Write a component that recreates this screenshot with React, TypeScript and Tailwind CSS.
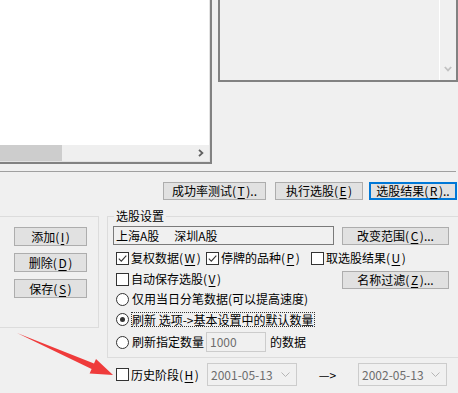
import React from 'react';

function Key({ c }: { c: string }) {
  return (
    <span>(<span className="mx-[1.5px] underline underline-offset-[2px]">{c}</span>)</span>
  );
}

function Btn({ text, k, tail = '', className = '', primary = false }: {
  text: string; k: string; tail?: string; className?: string; primary?: boolean;
}) {
  return (
    <div className={`flex items-center justify-center shrink-0 bg-[#e1e1e1] ${primary ? 'border-2 border-[#0078d7]' : 'border border-[#adadad]'} ${className}`}>
      <span className="whitespace-nowrap">{text}<Key c={k} />{tail}</span>
    </div>
  );
}

function Check({ on = false }: { on?: boolean }) {
  return (
    <span className="w-[13px] h-[13px] shrink-0 border border-[#333333] bg-white flex items-center justify-center">
      {on && (
        <svg width="11" height="11" viewBox="0 0 11 11">
          <path d="M1.8 5.6 L4.3 8.1 L9.3 2.6" fill="none" stroke="#333333" strokeWidth="1.1" />
        </svg>
      )}
    </span>
  );
}

function Radio({ on = false }: { on?: boolean }) {
  return (
    <span className="w-[13px] h-[13px] shrink-0 rounded-full border border-[#333333] bg-white flex items-center justify-center">
      {on && <span className="w-[5px] h-[5px] rounded-full bg-[#333333]" />}
    </span>
  );
}

function DateBox({ v, className = '' }: { v: string; className?: string }) {
  return (
    <div className={`h-[23px] shrink-0 border border-[#cccccc] bg-[#f0f0f0] flex items-center pl-[3px] pr-[6px] text-[#6d6d6d] ${className}`}>
      <span className="flex-1">{v}</span>
      <svg width="9" height="5" viewBox="0 0 9 5">
        <path d="M0.5 0.5 L4.5 4.5 L8.5 0.5" fill="none" stroke="#b5b5b5" />
      </svg>
    </div>
  );
}

export default function App() {
  return (
    <div className="relative w-[458px] h-[393px] overflow-hidden bg-[#f0f0f0] text-[12px] leading-[14px] text-black font-['Noto_Sans_CJK_SC','Liberation_Sans',sans-serif]">
      {/* result list + preview */}
      <div className="flex items-start h-[164px]">
        <div className="w-[212px] h-[164px] shrink-0 border-r-2 border-b-2 border-[#828282] flex flex-col">
          <div className="flex-1 flex flex-col border-r border-b border-[#e3e3e3]">
            <div className="flex-1 bg-white" />
            <div className="h-[16px] flex items-center bg-[#efefef]">
              <div className="w-[62px] h-full bg-[#cdcdcd]" />
              <div className="flex-1" />
              <svg width="6" height="8" viewBox="0 0 6 8" className="mr-[5px]">
                <path d="M1 0.8 L4.4 4 L1 7.2" fill="none" stroke="#606060" strokeWidth="1.8" />
              </svg>
            </div>
          </div>
        </div>
        <div className="ml-[6px] w-[240px] h-[82px] shrink-0 border-l-2 border-r-2 border-b-2 border-[#828282] flex">
          <div className="flex-1" />
          <div className="w-[17px] border-l border-white flex flex-col justify-end items-center pb-[8px]">
            <svg width="8" height="6" viewBox="0 0 8 6">
              <path d="M0.8 1 L4 4.4 L7.2 1" fill="none" stroke="#c2c2c2" strokeWidth="1.8" />
            </svg>
          </div>
        </div>
      </div>

      <div className="mt-[7px] h-px w-[456px] bg-[#a0a0a0]" />

      {/* action buttons */}
      <div className="mt-[10px] flex pl-[163px]">
        <Btn text="成功率测试" k="T" tail=".." className="w-[103px] h-[18px]" />
        <Btn text="执行选股" k="E" className="ml-[9px] w-[88px] h-[18px]" />
        <Btn text="选股结果" k="R" tail=".." primary className="ml-[6px] w-[88px] h-[18px]" />
      </div>

      {/* groups */}
      <div className="mt-[16px] flex items-start">
        <div className="-ml-px w-[100px] h-[112px] shrink-0 border border-[#dcdcdc] flex flex-col pl-[14px] pt-[10px] gap-[7px]">
          <Btn text="添加" k="I" className="w-[73px] h-[19px]" />
          <Btn text="删除" k="D" className="w-[73px] h-[19px]" />
          <Btn text="保存" k="S" className="w-[73px] h-[19px]" />
        </div>

        <div className="relative ml-[8px] w-[360px] h-[142px] shrink-0 border border-[#dcdcdc] pl-[8px] pt-[9px]">
          <span className="absolute -top-[8px] left-[6px] px-[2px] bg-[#f0f0f0]">选股设置</span>

          <div className="-ml-[3px] flex items-center h-[19px]">
            <div className="w-[221px] h-[19px] border border-[#7a7a7a] bg-[#f0f0f0] flex items-center pl-[2px]">
              <span>上海A股</span>
              <span className="ml-[15px]">深圳A股</span>
            </div>
            <Btn text="改变范围" k="C" tail="..." className="ml-[8px] w-[107px] h-[18px]" />
          </div>

          <div className="mt-[6px] flex items-center h-[14px]">
            <label className="w-[90px] flex items-center gap-[2px]"><Check on /><span>复权数据<Key c="W" /></span></label>
            <label className="w-[105px] flex items-center gap-[2px]"><Check on /><span>停牌的品种<Key c="P" /></span></label>
            <label className="flex items-center gap-[2px]"><Check /><span>取选股结果<Key c="U" /></span></label>
          </div>

          <div className="mt-[6px] flex items-start">
            <label className="w-[226px] mt-[1px] flex items-center gap-[2px]"><Check /><span>自动保存选股<Key c="V" /></span></label>
            <Btn text="名称过滤" k="Z" tail="..." className="w-[107px] h-[18px]" />
          </div>

          <div className="mt-[3px] flex items-center h-[14px] gap-[3px]">
            <Radio /><span>仅用当日分笔数据(可以提高速度)</span>
          </div>

          <div className="mt-[6px] flex items-center h-[14px] gap-[2px]">
            <Radio on />
            <span className="border border-dotted border-[#333333] leading-[13px]">刷新 选项-&gt;基本设置中的默认数量</span>
          </div>

          <div className="mt-[6px] flex items-center h-[20px]">
            <label className="w-[90px] flex items-center gap-[3px]"><Radio /><span>刷新指定数量</span></label>
            <div className="w-[60px] h-[20px] border border-[#cccccc] bg-[#f0f0f0] flex items-center pl-[3px] text-[#6d6d6d]">1000</div>
            <span className="ml-[4px]">的数据</span>
          </div>
        </div>
      </div>

      {/* history range */}
      <div className="mt-[5px] flex items-center h-[23px] pl-[116px]">
        <label className="w-[91px] flex items-center gap-[2px]"><Check /><span>历史阶段<Key c="H" /></span></label>
        <DateBox v="2001-05-13" className="w-[90px]" />
        <span className="w-[61px] text-center">—&gt;</span>
        <DateBox v="2002-05-13" className="w-[89px]" />
      </div>

      {/* annotation arrow */}
      <svg width="458" height="393" viewBox="0 0 458 393" className="absolute inset-0 pointer-events-none">
        <polygon
          points="17,333 94,363.5 96,358.9 113,375 89.6,373.5 91.6,368.9"
          fill="#ef3b3b"
        />
      </svg>
    </div>
  );
}
